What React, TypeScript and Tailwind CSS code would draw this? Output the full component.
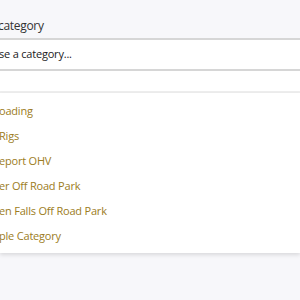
const items = [
  "oading",
  "Rigs",
  "eport OHV",
  "er Off Road Park",
  "en Falls Off Road Park",
  "ple Category",
];

export default function App() {
  return (
    <div
      className="w-[300px] h-[300px] overflow-hidden bg-[#f7f7fa] text-[#333]"
      style={{ fontFamily: '"Open Sans", sans-serif' }}
    >
      <div className="h-[38px] pt-[16px] text-[12px] tracking-[-0.3px] leading-[20px] -ml-[2px] text-[#333]">
        category
      </div>

      {/* select box */}
      <div className="h-[33px] bg-white border-y-2 border-y-[#d6d6d6] flex items-center text-[11px] tracking-[-0.2px] text-[#222] -ml-[1px]">
        se a category...
      </div>

      {/* search area */}
      <div className="h-[22px] bg-white border-b-2 border-b-[#eeeeee]" />

      {/* options */}
      <div className="bg-white pt-[6px] pb-[4px] shadow-[0_2px_4px_rgba(0,0,0,0.12)]">
        {items.map((item, idx) => (
          <div
            key={idx}
            className="h-[25px] flex items-center text-[11px] tracking-[-0.2px] text-[#9c7c22] -ml-[1px]"
          >
            {item}
          </div>
        ))}
      </div>
    </div>
  );
}
